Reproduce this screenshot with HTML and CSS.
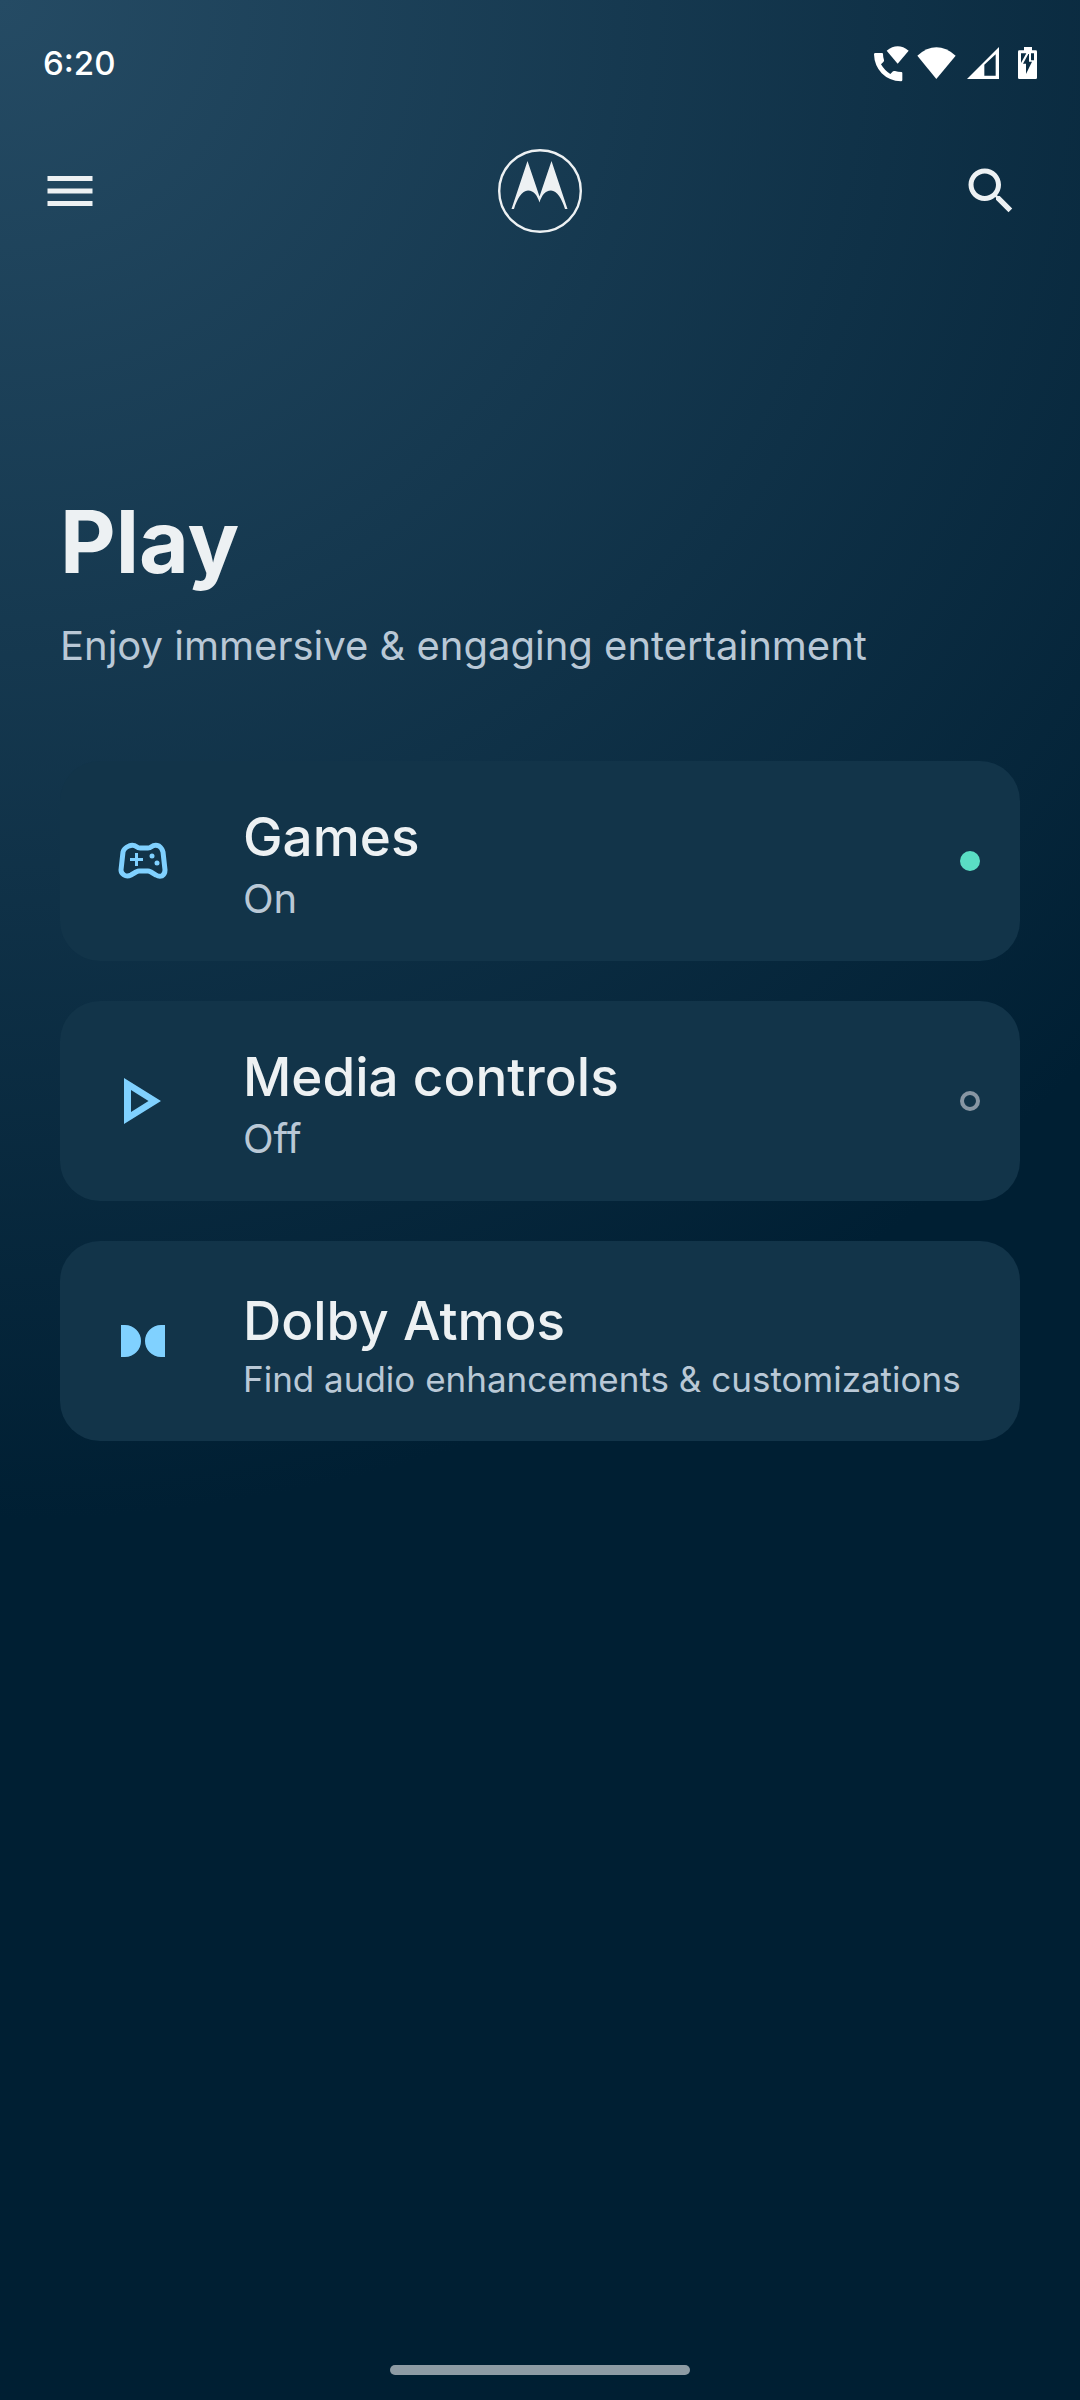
FILE: index.html
```html
<!DOCTYPE html>
<html lang="en">
<head>
    <meta charset="UTF-8">
    <meta name="viewport" content="width=device-width, initial-scale=1.0">
    <title>Play</title>
    <link rel="stylesheet" href="styles.css">
</head>
<body>
    <div class="screen">
        <!-- Status bar -->
        <div class="status-bar">
            <span class="clock">6:20</span>
            <div class="status-icons">
                <svg width="35" height="37" viewBox="104 73 105 111">
                    <path d="M108 97H128Q131 97 131 100Q131 110 134 118Q135 121 132 124L125 131Q136 150 153 160L161 152Q164 150 167 151Q176 154 186 154Q189 154 189 157V178Q189 182 185 182Q150 181 127 158Q105 134 104 101Q104 97 108 97Z"/>
                    <path d="M142 90Q175 64 208 90L175 129Z"/>
                </svg>
                <svg width="39" height="32" viewBox="233 77 117 96">
                    <path d="M234 103Q291 53 349 103L291 173Z"/>
                </svg>
                <svg class="signal" width="32" height="32" viewBox="381 78 96 96">
                    <path fill-rule="evenodd" d="M381 174L477 78V174ZM433 131V164H467V100Z"/>
                </svg>
                <svg class="battery" width="19" height="32" viewBox="534 80 57 96">
                    <path fill-rule="evenodd" d="M552 80H576V90H587Q591 90 591 94V172Q591 176 587 176H538Q534 176 534 172V94Q534 90 538 90H552ZM543 99V128L559 99ZM565 101L549 130H558V161L576 124H567V101ZM573 99V120H582V99Z"/>
                </svg>
            </div>
        </div>

        <!-- App bar -->
        <header class="app-bar">
            <button type="button" class="icon-button" aria-label="Menu">
                <svg width="60" height="60" viewBox="0 0 24 24"><path d="M3 18h18v-2H3v2zm0-5h18v-2H3v2zm0-7v2h18V6H3z"/></svg>
            </button>
            <svg class="logo" width="84" height="84" viewBox="0 0 84 84">
                <circle cx="42" cy="42" r="40.800"/>
                <path d="M13.500 60L29.500 12L41.500 47.500L53.500 12L69.500 60H67C64 50 59 41.500 53 41.500C47 41.500 43.500 47 41.500 53.500C39.500 47 36 41.500 30 41.500C24 41.500 19 50 16 60Z"/>
            </svg>
            <button type="button" class="icon-button search" aria-label="Search">
                <svg width="60" height="60" viewBox="0 0 24 24"><path d="M15.500 14h-.79l-.28-.27C15.410 12.590 16 11.110 16 9.500 16 5.910 13.090 3 9.500 3S3 5.910 3 9.500 5.910 16 9.500 16c1.610 0 3.090-.59 4.230-1.570l.27.28v.79l5 4.990L20.490 19l-4.990-5zm-6 0C7.010 14 5 11.990 5 9.500S7.010 5 9.500 5 14 7.010 14 9.500 11.990 14 9.500 14z"/></svg>
            </button>
        </header>

        <main class="content">
            <h1>Play</h1>
            <p class="intro">Enjoy immersive &amp; engaging entertainment</p>

            <nav class="cards">
                <a class="card" href="#games">
                    <svg class="card-icon" width="60" height="60" viewBox="0 0 60 60">
                        <path class="line" d="M17 15Q21 13 25 16Q26 17 28 17H36Q38 17 39 16Q43 13 47 15Q50 17 51 21L53 39Q53 43 50 45Q47 46 44 44L39 41Q37 40 36 40H27Q26 40 24 41L19 44Q15 46 12 44Q9 42 9 39L11 21Q12 17 17 15Z"/>
                        <path d="M23 22h3v5h5v3h-5v5h-3v-5h-5v-3h5z"/>
                        <circle cx="40" cy="25" r="2.500"/>
                        <circle cx="45" cy="32" r="2.500"/>
                    </svg>
                    <div class="card-text">
                        <span class="card-title">Games</span>
                        <span class="card-state">On</span>
                    </div>
                    <span class="dot dot-on"></span>
                </a>
                <a class="card" href="#media">
                    <svg class="card-icon" width="60" height="60" viewBox="0 0 60 60">
                        <path fill-rule="evenodd" d="M12 7L49 30L12 53ZM19 19V41L36.500 30Z"/>
                    </svg>
                    <div class="card-text">
                        <span class="card-title">Media controls</span>
                        <span class="card-state">Off</span>
                    </div>
                    <span class="dot"></span>
                </a>
                <a class="card" href="#dolby">
                    <svg class="card-icon" width="60" height="60" viewBox="0 0 60 60">
                        <path d="M9 14h4a16 16 0 0 1 0 32h-4zM53 14h-4a16 16 0 0 0 0 32h4z"/>
                    </svg>
                    <div class="card-text">
                        <span class="card-title">Dolby Atmos</span>
                        <span class="card-note">Find audio enhancements &amp; customizations</span>
                    </div>
                </a>
            </nav>
        </main>

        <div class="home-bar"></div>
    </div>
</body>
</html>
```
FILE: styles.css
```css
* {
    box-sizing: border-box;
}

body {
    margin: 0;
    font-family: Inter, "Open Sans", sans-serif;
    color: #edf1f3;
    background-color: #001f33;
}

.screen {
    min-height: 100vh;
    display: flex;
    flex-direction: column;
    background: radial-gradient(circle 1520px at 0 0, #254b64, #001f33);
}

svg {
    display: block;
    fill: currentColor;
}

.status-bar {
    display: flex;
    align-items: center;
    justify-content: space-between;
    height: 126px;
    padding: 0 43px;
    color: #ffffff;
}

.clock {
    font-size: 33px;
    font-weight: 500;
}

.status-icons {
    display: flex;
    align-items: center;
    gap: 8px;
}

.signal {
    margin-left: 3px;
}

.battery {
    margin-left: 11px;
}

.app-bar {
    display: grid;
    grid-template-columns: 1fr auto 1fr;
    align-items: center;
    height: 130px;
    padding: 0 40px;
}

.icon-button {
    justify-self: start;
    padding: 0;
    border: none;
    background: none;
    color: inherit;
    cursor: pointer;
}

.search {
    justify-self: end;
    margin-right: 19px;
}

.logo circle {
    fill: none;
    stroke: currentColor;
    stroke-width: 2.400;
}

.content {
    flex: 1;
    padding: 224px 60px 0;
}

h1 {
    margin: 0;
    font-size: 86px;
    line-height: 124px;
    font-weight: 700;
}

.intro {
    margin: 18px 0 91px;
    font-size: 40px;
    line-height: 48px;
    color: #b9c8d6;
}

.cards {
    display: flex;
    flex-direction: column;
    gap: 40px;
}

.card {
    display: flex;
    align-items: center;
    min-height: 200px;
    padding: 0 40px 0 52px;
    border-radius: 40px;
    background-color: #123449;
    color: inherit;
    text-decoration: none;
}

.card-icon {
    flex: none;
    margin-right: 71px;
    color: #80d1ff;
}

.line {
    fill: none;
    stroke: currentColor;
    stroke-width: 5;
}

.card-text {
    flex: 1;
    display: flex;
    flex-direction: column;
    padding-top: 8px;
}

.card-title {
    font-size: 53px;
    line-height: 68px;
    font-weight: 500;
}

.card-state {
    font-size: 40px;
    line-height: 56px;
    color: #b9c8d6;
}

.card-note {
    font-size: 35px;
    line-height: 48px;
    white-space: nowrap;
    color: #b9c8d6;
}

.dot {
    width: 20px;
    height: 20px;
    border: 4px solid #8896a3;
    border-radius: 50%;
}

.dot-on {
    border-color: #5adec4;
    background-color: #5adec4;
}

.home-bar {
    align-self: center;
    width: 300px;
    height: 10px;
    margin-bottom: 25px;
    border-radius: 5px;
    background-color: #8e9ba4;
}
```
